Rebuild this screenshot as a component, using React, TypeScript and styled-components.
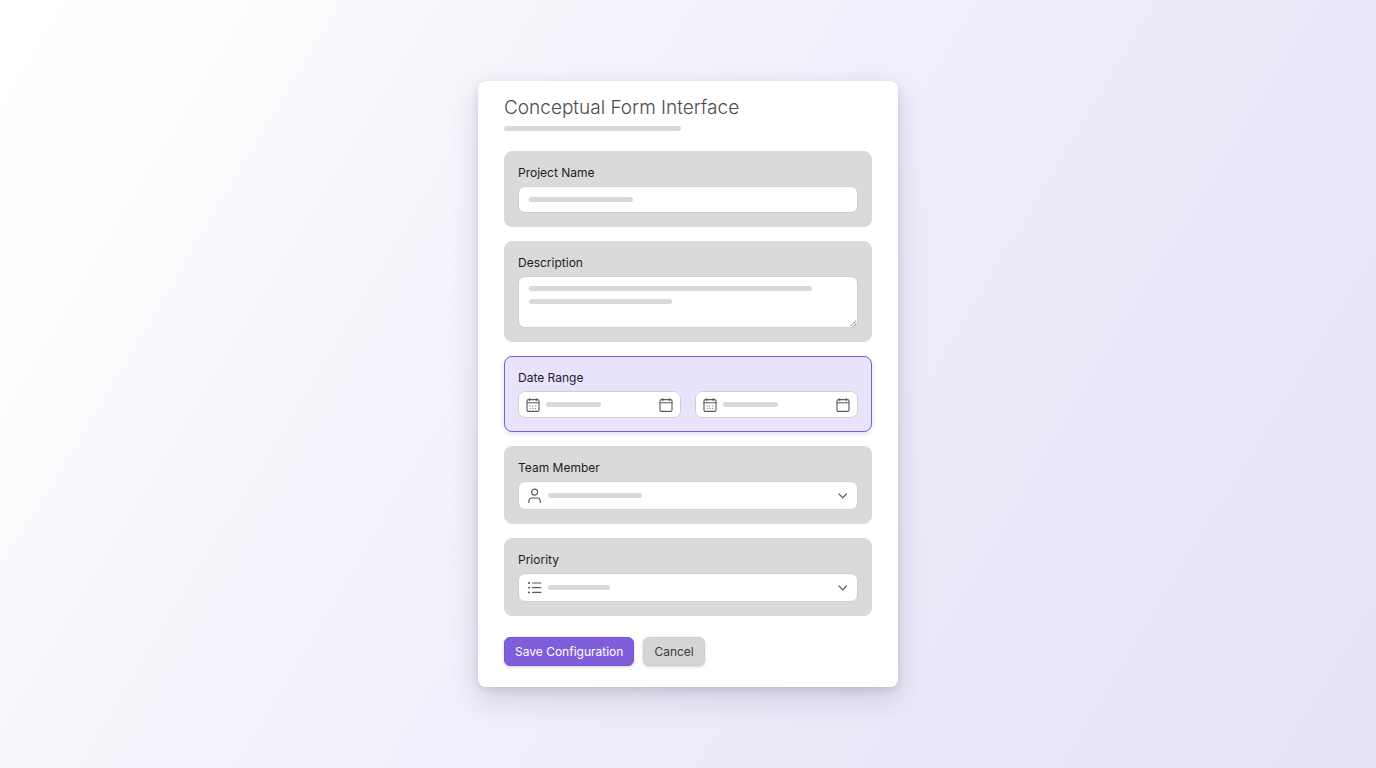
import React from "react";
import styled, { createGlobalStyle, css } from "styled-components";

const GlobalStyle = createGlobalStyle`
  *, *::before, *::after { box-sizing: border-box; }
  body {
    margin: 0;
    font-family: Inter, "Liberation Sans", sans-serif;
    color: #1c1c1f;
  }
`;

const Page = styled.main`
  min-height: 100vh;
  display: flex;
  align-items: center;
  justify-content: center;
  padding: 24px;
  background: linear-gradient(121deg, #ffffff 0%, #fdfdfe 12%, #f7f6fc 26%, #f1effb 48%, #ebe8f9 73%, #e6e3f9 100%);
`;

const Card = styled.form`
  width: 100%;
  max-width: 420px;
  padding: 15px 26px 21px;
  border-radius: 8px;
  background: #ffffff;
  box-shadow: 0 12px 30px rgba(50, 45, 80, 0.16), 0 3px 8px rgba(50, 45, 80, 0.12);
`;

const Title = styled.h1`
  margin: 0;
  font-size: 19px;
  line-height: 24px;
  font-weight: 300;
  color: #4c4c4c;
`;

const Bar = styled.span<{ $width: number }>`
  display: block;
  flex: none;
  width: ${(p) => p.$width}px;
  max-width: 100%;
  height: 5px;
  border-radius: 3px;
  background: #d9d9d9;
`;

const Header = styled.header`
  display: flex;
  flex-direction: column;
  gap: 6px;
  margin-bottom: 20px;
`;

const Sections = styled.div`
  display: flex;
  flex-direction: column;
  gap: 14px;
`;

const Panel = styled.div<{ $active?: boolean }>`
  display: flex;
  flex-direction: column;
  gap: 5px;
  padding: 13px;
  border: 1px solid ${(p) => (p.$active ? "#7c5cc4" : "#dadada")};
  border-radius: 8px;
  background: ${(p) => (p.$active ? "#e8e3fb" : "#dadada")};
  box-shadow: ${(p) => (p.$active ? "0 2px 5px rgba(110, 80, 200, 0.2)" : "none")};
`;

const Label = styled.label`
  font-size: 12px;
  line-height: 16px;
`;

const DateRow = styled.div`
  display: grid;
  grid-template-columns: 1fr 1fr;
  gap: 14px;
`;

const Field = styled.div<{ $height: number }>`
  display: grid;
  height: ${(p) => p.$height}px;
  border: 1px solid #d0d0d3;
  border-radius: 7px;
  background: #ffffff;

  > * {
    grid-area: 1 / 1;
    min-width: 0;
  }
`;

const control = css`
  width: 100%;
  height: 100%;
  margin: 0;
  padding: 0 10px;
  border: 0;
  border-radius: 6px;
  outline: none;
  appearance: none;
  background: transparent;
  font: inherit;
  font-size: 12px;
  color: inherit;
`;

const Input = styled.input`
  ${control}
`;

const TextArea = styled.textarea`
  ${control}
  resize: none;
`;

const Select = styled.select`
  ${control}
`;

const Overlay = styled.div<{ $side: number; $gap: number }>`
  display: flex;
  align-items: center;
  gap: ${(p) => p.$gap}px;
  padding: 0 ${(p) => p.$side}px;
  pointer-events: none;
  color: #5a5a5f;

  svg {
    flex: none;
  }
`;

const Lines = styled.div`
  position: relative;
  display: flex;
  flex-direction: column;
  gap: 8px;
  padding: 9px 10px;
  pointer-events: none;
`;

const Grip = styled.svg`
  position: absolute;
  right: 0;
  bottom: 0;
`;

const Spacer = styled.span`
  flex: 1;
`;

const Actions = styled.div`
  display: flex;
  gap: 9px;
  margin-top: 21px;
`;

const Button = styled.button<{ $primary?: boolean }>`
  height: 29px;
  padding: 0 10px;
  border: 1px solid ${(p) => (p.$primary ? "#7653d3" : "#cecece")};
  border-radius: 6px;
  background: ${(p) => (p.$primary ? "#7f5edb" : "#d5d5d5")};
  color: ${(p) => (p.$primary ? "#ffffff" : "#3a3a3a")};
  font: inherit;
  font-size: 12px;
  line-height: 16px;
  white-space: nowrap;
  box-shadow: 0 1px 3px rgba(60, 50, 100, 0.22);
  cursor: pointer;
`;

const CalendarIcon = ({ dots = false }: { dots?: boolean }) => (
  <svg width="14" height="14" viewBox="0 0 14 14" fill="none" stroke="currentColor" strokeWidth="1.1" strokeLinecap="round" aria-hidden="true">
    <rect x="1" y="1.6" width="12" height="11.8" rx="1.4" />
    <path d="M1 4.8h12M3.7 0.6v2M10.3 0.6v2" />
    {dots && <path d="M3.9 8h.2M6.5 8.4h.2M9.6 8h.2M4.2 10.4h.2M6.9 10.4h.2M9.3 10.4h.2" strokeWidth="0.9" />}
  </svg>
);

const UserIcon = () => (
  <svg width="14" height="16" viewBox="0 0 14 16" fill="none" stroke="currentColor" strokeWidth="1.2" strokeLinecap="round" aria-hidden="true">
    <circle cx="6.6" cy="4.2" r="3" />
    <path d="M0.9 14.4v-1c0-2.2 1.3-3.4 3.5-3.4h4.4c2.2 0 3.5 1.2 3.5 3.4v1" />
  </svg>
);

const ListIcon = () => (
  <svg width="14" height="14" viewBox="0 0 14 14" fill="none" stroke="currentColor" strokeWidth="1.2" strokeLinecap="round" aria-hidden="true">
    <path d="M4.6 2h8.2M4.6 6.6h8.2M4.6 11.4h8.2" />
    <path d="M0.9 2h.3M0.9 6.6h.3M0.9 11.4h.3" strokeWidth="1.8" />
  </svg>
);

const ChevronIcon = () => (
  <svg width="10" height="10" viewBox="0 0 10 10" fill="none" stroke="currentColor" strokeWidth="1.2" strokeLinecap="round" strokeLinejoin="round" aria-hidden="true">
    <path d="M1 3L4.7 6.8L8.4 3" />
  </svg>
);

const DateField = ({ id, label }: { id: string; label: string }) => (
  <Field $height={27}>
    <Input id={id} type="text" aria-label={label} />
    <Overlay $side={7} $gap={6}>
      <CalendarIcon dots />
      <Bar $width={55} />
      <Spacer />
      <CalendarIcon />
    </Overlay>
  </Field>
);

const SelectField = ({ id, icon, width }: { id: string; icon: React.ReactNode; width: number }) => (
  <Field $height={29}>
    <Select id={id} defaultValue="">
      <option value="" />
    </Select>
    <Overlay $side={9} $gap={6}>
      {icon}
      <Bar $width={width} />
      <Spacer />
      <ChevronIcon />
    </Overlay>
  </Field>
);

export default function App() {
  return (
    <Page>
      <GlobalStyle />
      <Card onSubmit={(e) => e.preventDefault()}>
        <Header>
          <Title>Conceptual Form Interface</Title>
          <Bar $width={177} />
        </Header>
        <Sections>
          <Panel>
            <Label htmlFor="project">Project Name</Label>
            <Field $height={27}>
              <Input id="project" type="text" />
              <Overlay $side={10} $gap={6}>
                <Bar $width={104} />
              </Overlay>
            </Field>
          </Panel>
          <Panel>
            <Label htmlFor="description">Description</Label>
            <Field $height={52}>
              <TextArea id="description" />
              <Lines>
                <Bar $width={283} />
                <Bar $width={143} />
                <Grip width="8" height="8" viewBox="0 0 8 8" fill="none" stroke="#5a5a5f" strokeWidth="1" strokeDasharray="1.6 0.5" aria-hidden="true">
                  <path d="M1.6 7L6.8 1.8M4.4 7.2L7 4.6" />
                </Grip>
              </Lines>
            </Field>
          </Panel>
          <Panel $active>
            <Label htmlFor="start">Date Range</Label>
            <DateRow>
              <DateField id="start" label="Start date" />
              <DateField id="end" label="End date" />
            </DateRow>
          </Panel>
          <Panel>
            <Label htmlFor="member">Team Member</Label>
            <SelectField id="member" icon={<UserIcon />} width={94} />
          </Panel>
          <Panel>
            <Label htmlFor="priority">Priority</Label>
            <SelectField id="priority" icon={<ListIcon />} width={62} />
          </Panel>
        </Sections>
        <Actions>
          <Button type="submit" $primary>Save Configuration</Button>
          <Button type="button">Cancel</Button>
        </Actions>
      </Card>
    </Page>
  );
}
